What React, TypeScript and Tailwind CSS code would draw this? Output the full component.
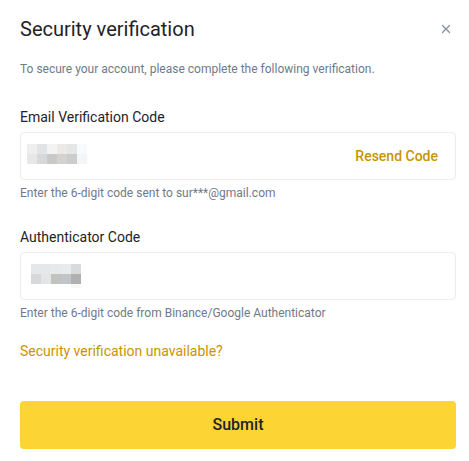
import { X } from "lucide-react";

// mosaic blocks standing in for the blurred digits
const EMAIL_MOSAIC = [
  ["#eeeeee", "#e2e3e5", "#f3f3f3", "#eceae7", "#e5e6e8", "#f8fafc"],
  ["#e8e7e6", "#d7d8da", "#c9c9c9", "#d4d2ce", "#cccccd", "#f3f5f8"],
];

const AUTH_MOSAIC = [
  ["#e6e7e9", "#e6e7e9", "#e8e9eb", "#e9eaec", "#d9dadc"],
  ["#d6d8da", "#e4e5e5", "#c2c2c2", "#c1c4c8", "#b0b0b0"],
  ["#ffffff", "#ffffff", "#ffffff", "#ffffff", "#f8f8f8"],
];

function Mosaic({ rows }: { rows: string[][] }) {
  return (
    <div className="flex flex-col">
      {rows.map((row, r) => (
        <div key={r} className={r === 2 ? "flex h-[4px]" : "flex h-[10px]"}>
          {row.map((c, i) => (
            <div key={i} className="w-[10px] h-full" style={{ background: c }} />
          ))}
        </div>
      ))}
    </div>
  );
}

export default function App() {
  return (
    <div
      className="w-[469px] h-[461px] bg-white pl-5 pr-[13px] pt-[15px] text-[#1e2329]"
      style={{ fontFamily: "Roboto, 'Noto Sans', sans-serif" }}
    >
      <div className="flex items-center justify-between">
        <h1 className="text-[20px] leading-[28px] font-normal">Security verification</h1>
        <button className="mr-[3px] text-[#848e9c]">
          <X size={14} strokeWidth={2.2} />
        </button>
      </div>

      <p className="mt-[18px] text-[12px] leading-4 text-[#707a8a]">
        To secure your account, please complete the following verification.
      </p>

      {/* Email code */}
      <label className="mt-[30px] block text-[14px] leading-5">Email Verification Code</label>
      <div className="mt-[5px] flex h-12 items-center justify-between rounded border border-[#eaecef] pl-[6px] pr-[17px]">
        <div className="mb-1">
          <Mosaic rows={EMAIL_MOSAIC} />
        </div>
        <span className="text-[14px] font-medium text-[#c99400]">Resend Code</span>
      </div>
      <p className="mt-[5px] text-[12px] leading-4 text-[#707a8a]">
        Enter the 6-digit code sent to sur***@gmail.com
      </p>

      {/* Authenticator code */}
      <label className="mt-[26px] block text-[14px] leading-5">Authenticator Code</label>
      <div className="mt-[5px] flex h-12 items-center rounded border border-[#eaecef] pl-[10px]">
        <Mosaic rows={AUTH_MOSAIC} />
      </div>
      <p className="mt-[5px] text-[12px] leading-4 text-[#707a8a]">
        Enter the 6-digit code from Binance/Google Authenticator
      </p>

      <a className="mt-5 block text-[14px] leading-5 text-[#c99400]">Security verification unavailable?</a>

      <button className="mt-10 flex h-12 w-full items-center justify-center rounded bg-[#fcd535] text-[16px] font-medium">
        Submit
      </button>
    </div>
  );
}
